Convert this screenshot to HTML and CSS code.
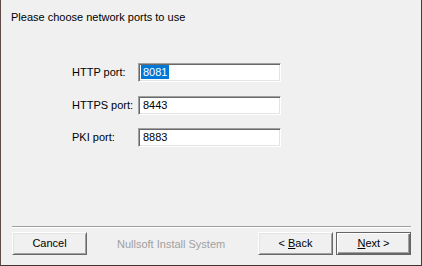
FILE: index.html
```html
<!DOCTYPE html>
<html>
<head>
<meta charset="utf-8">
<link rel="stylesheet" href="styles.css">
</head>
<body>
<div class="window">
  <div class="header">Please choose network ports to use</div>
  <div class="form">
    <div class="row">
      <span class="label">HTTP port:</span>
      <span class="field"><span class="value selected">8081</span></span>
    </div>
    <div class="row row-second">
      <span class="label">HTTPS port:</span>
      <span class="field"><span class="value">8443</span></span>
    </div>
    <div class="row row-third">
      <span class="label">PKI port:</span>
      <span class="field"><span class="value">8883</span></span>
    </div>
  </div>
  <div class="footer">
    <div class="separator"></div>
    <div class="buttons">
      <button class="btn">Cancel</button>
      <span class="brand">Nullsoft Install System</span>
      <span class="spacer"></span>
      <button class="btn">&lt; <u>B</u>ack</button>
      <button class="btn btn-default"><u>N</u>ext &gt;</button>
    </div>
  </div>
</div>
</body>
</html>
```

FILE: styles.css
```css
html, body {
  margin: 0;
  padding: 0;
  background: #f0f0f0;
}

body {
  font-family: "Liberation Sans", Arial, sans-serif;
  font-size: 11px;
  color: #000;
}

.window {
  width: 422px;
  height: 266px;
  box-sizing: border-box;
  border-left: 1px solid #5e4b47;
  border-right: 1px solid #4a3c3a;
  border-bottom: 1px solid #3f3432;
  display: flex;
  flex-direction: column;
  background: #f0f0f0;
}

.header {
  padding: 11px 0 0 10px;
  line-height: 13px;
  height: 13px;
}

.form {
  margin-top: 39px;
  padding-left: 71px;
  display: flex;
  flex-direction: column;
}

.row {
  display: flex;
  align-items: center;
  height: 19px;
}

.row-second {
  margin-top: 14px;
}

.row-third {
  margin-top: 13px;
}

.label {
  width: 66px;
  line-height: 19px;
}

.field {
  display: block;
  width: 143px;
  height: 19px;
  box-sizing: border-box;
  border: 1px solid;
  border-color: #a0a0a0 #ffffff #ffffff #a0a0a0;
  box-shadow: inset 1px 1px 0 #696969, inset -1px -1px 0 #e3e3e3;
  background: #fff;
  padding: 1px 0 0 2px;
}

.value {
  display: inline-block;
  line-height: 14px;
  height: 14px;
  padding: 0 2px;
}

.value.selected {
  background: #0078d7;
  color: #fff;
}

.footer {
  margin-top: auto;
  padding-bottom: 10px;
}

.separator {
  margin: 0 10px 0 11px;
  border-top: 1px solid #a0a0a0;
  border-bottom: 1px solid #ffffff;
}

.buttons {
  display: flex;
  align-items: center;
  margin-top: 4px;
  padding: 0 10px 0 11px;
  gap: 3px;
}

.btn {
  width: 75px;
  height: 23px;
  box-sizing: border-box;
  margin: 0;
  padding: 0;
  font-family: "Liberation Sans", Arial, sans-serif;
  font-size: 11px;
  color: #000;
  background: #f0f0f0;
  border: 1px solid;
  border-color: #ffffff #696969 #696969 #ffffff;
  box-shadow: inset 1px 1px 0 #e3e3e3, inset -1px -1px 0 #a0a0a0;
  line-height: 19px;
}

.btn-default {
  border-color: #646464;
  box-shadow: inset 1px 1px 0 #ffffff, inset -1px -1px 0 #696969, inset -2px -2px 0 #a0a0a0;
}

.brand {
  margin-left: 27px;
  color: #a0a0a0;
}

.spacer {
  flex: 1;
}
```
